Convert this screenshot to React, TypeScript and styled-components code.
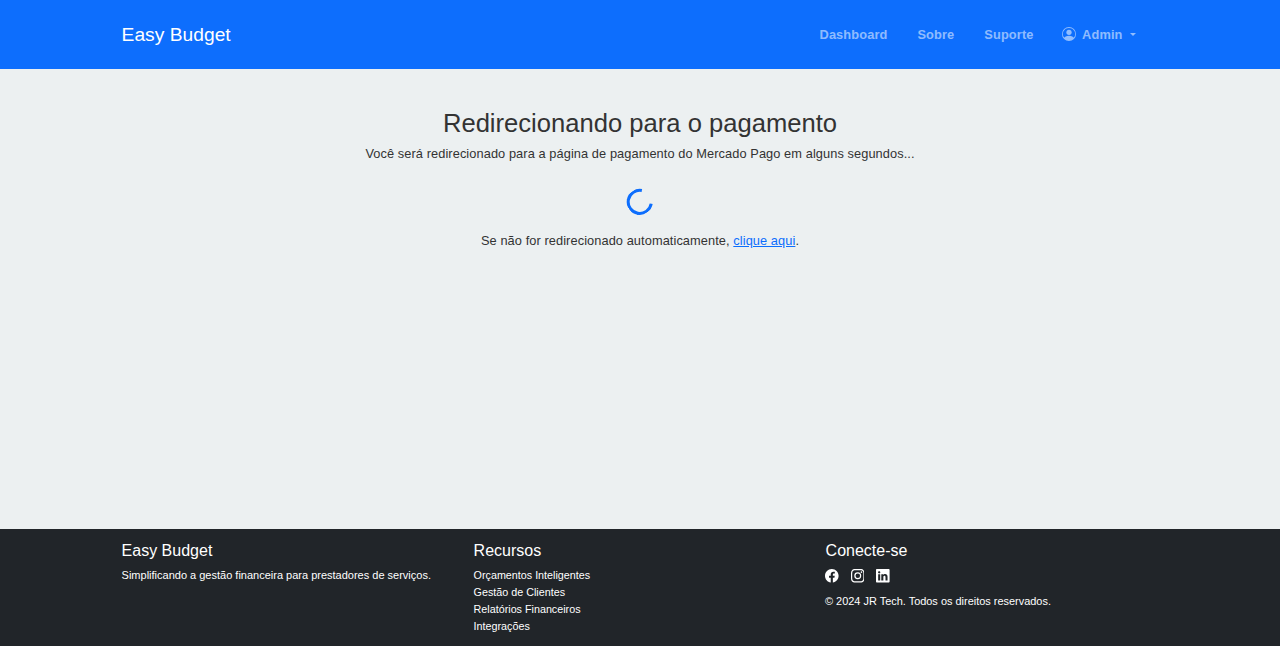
import React from "react";
import styled, { createGlobalStyle } from "styled-components";
import { BsPersonCircle, BsFacebook, BsInstagram, BsLinkedin } from "react-icons/bs";

const GlobalStyle = createGlobalStyle`
  *, *::before, *::after { box-sizing: border-box; }
  body {
    margin: 0;
    background: #ecf0f1;
    color: #333;
    font-family: "Liberation Sans", Arial, sans-serif;
    font-size: 12.8px;
    line-height: 1.5;
  }
  h2, h5, p, ul { margin: 0; padding: 0; font-weight: 400; }
`;

const Page = styled.div`
  min-height: 100vh;
  display: flex;
  flex-direction: column;
`;

const Container = styled.div`
  width: 1056px;
  margin: 0 auto;
  padding: 0 9.6px;
`;

const Header = styled.header`
  height: 69px;
  display: flex;
  background: #0d6efd;
`;

const NavBar = styled(Container)`
  display: flex;
  align-items: center;
  justify-content: space-between;
`;

const Brand = styled.a`
  padding-top: 2px;
  color: #fff;
  font-size: 19.2px;
  letter-spacing: 0.03px;
`;

const Nav = styled.nav`
  display: flex;
  gap: 30px;
  padding-right: 22.4px;
`;

const NavLink = styled.a`
  display: flex;
  align-items: center;
  color: rgba(255, 255, 255, 0.55);
  font-weight: 600;
  letter-spacing: 0.12px;
`;

const UserLink = styled(NavLink)`
  margin-left: -2px;
  svg { width: 14px; height: 14px; margin: -2px 6.6px 0 0; }
`;

const Caret = styled.span`
  margin-left: 7.5px;
  border-top: 3px solid;
  border-left: 3px solid transparent;
  border-right: 3px solid transparent;
`;

const Main = styled.main`
  flex: 1;
  padding-top: 39px;
  text-align: center;
`;

const Title = styled.h2`
  font-size: 25.6px;
  line-height: 1.2;
  margin-bottom: 5.2px;
`;

const Message = styled.p`
  letter-spacing: 0.08px;
`;

const Spinner = styled.div`
  width: 25.6px;
  height: 25.6px;
  margin: 26px auto 16.2px;
  border: 3.2px solid #0d6efd;
  border-right-color: transparent;
  border-radius: 50%;
  transform: translateX(-0.3px) rotate(-35deg);
`;

const Link = styled.a`
  color: #0d6efd;
  text-decoration: underline;
`;

const Footer = styled.footer`
  height: 117px;
  padding-top: 12px;
  background: #212529;
  color: #fff;
  font-size: 11px;
`;

const Columns = styled(Container)`
  display: grid;
  grid-template-columns: repeat(3, 352px);
`;

const FooterTitle = styled.h5`
  font-size: 16px;
  line-height: 19px;
  margin-bottom: 7px;
`;

const FooterText = styled.p`
  line-height: 17px;
`;

const Copyright = styled(FooterText)`
  margin-left: -0.6px;
  font-size: 10.95px;
`;

const Links = styled.ul`
  list-style: none;
  font-size: 10.75px;
  line-height: 17px;
`;

const Social = styled.div`
  display: flex;
  gap: 12px;
  height: 14px;
  margin: 9.4px 0 9.6px -0.6px;
  svg { width: 13.6px; height: 13.6px; }
`;

const resources = ["Orçamentos Inteligentes", "Gestão de Clientes", "Relatórios Financeiros", "Integrações"];

export default function App() {
  return (
    <Page>
      <GlobalStyle />
      <Header>
        <NavBar>
          <Brand>Easy Budget</Brand>
          <Nav>
            <NavLink>Dashboard</NavLink>
            <NavLink>Sobre</NavLink>
            <NavLink>Suporte</NavLink>
            <UserLink><BsPersonCircle />Admin<Caret /></UserLink>
          </Nav>
        </NavBar>
      </Header>
      <Main>
        <Title>Redirecionando para o pagamento</Title>
        <Message>Você será redirecionado para a página de pagamento do Mercado Pago em alguns segundos...</Message>
        <Spinner />
        <Message>Se não for redirecionado automaticamente, <Link>clique aqui</Link>.</Message>
      </Main>
      <Footer>
        <Columns>
          <div>
            <FooterTitle>Easy Budget</FooterTitle>
            <FooterText>Simplificando a gestão financeira para prestadores de serviços.</FooterText>
          </div>
          <div>
            <FooterTitle>Recursos</FooterTitle>
            <Links>{resources.map((r) => <li key={r}>{r}</li>)}</Links>
          </div>
          <div>
            <FooterTitle>Conecte-se</FooterTitle>
            <Social><BsFacebook /><BsInstagram /><BsLinkedin /></Social>
            <Copyright>© 2024 JR Tech. Todos os direitos reservados.</Copyright>
          </div>
        </Columns>
      </Footer>
    </Page>
  );
}
